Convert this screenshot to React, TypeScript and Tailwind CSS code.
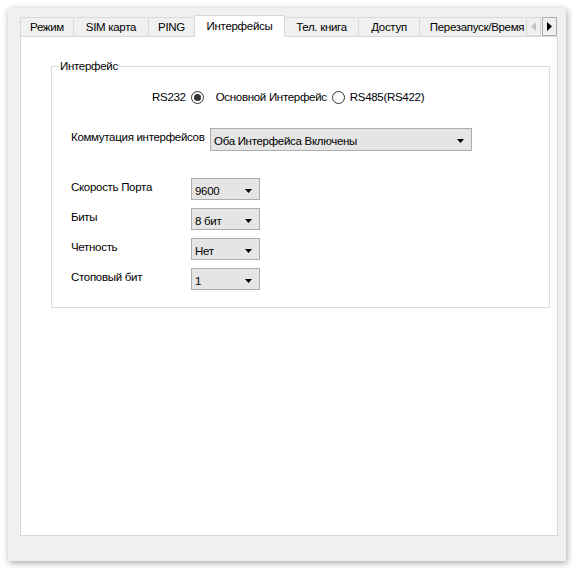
import React from "react";

type Tab = { label: string; width: string; active?: boolean };

const tabs: Tab[] = [
  { label: "Режим", width: "w-[54px]" },
  { label: "SIM карта", width: "w-[76px]" },
  { label: "PING", width: "w-[47px]" },
  { label: "Интерфейсы", width: "w-[91px]", active: true },
  { label: "Тел. книга", width: "w-[75px]" },
  { label: "Доступ", width: "w-[62px]" },
  { label: "Перезапуск/Время", width: "w-[116px]" },
];

const font =
  "font-['Segoe_UI','Liberation_Sans',Arial,sans-serif] text-[11.5px] leading-[16px] tracking-[-0.3px]";

function Radio({ checked }: { checked?: boolean }) {
  return (
    <span className="flex h-[13px] w-[13px] shrink-0 items-center justify-center rounded-full border border-[#333] bg-white">
      {checked && <span className="h-[7px] w-[7px] rounded-full bg-[#333]" />}
    </span>
  );
}

function Arrow() {
  return (
    <svg width="7" height="4" viewBox="0 0 7 4" className="shrink-0">
      <path d="M0 0H7L3.5 4Z" fill="#000" />
    </svg>
  );
}

function Combo({ value, width }: { value: string; width: string }) {
  return (
    <div
      className={`flex h-full ${width} items-center justify-between border border-[#adadad] bg-[#e5e5e5] pl-[3px] pr-[7px] pt-[3px]`}
    >
      <span className="whitespace-nowrap text-black">{value}</span>
      <Arrow />
    </div>
  );
}

function PortRow({ label, value }: { label: string; value: string }) {
  return (
    <div className="flex h-[22px] items-start">
      <span className="mt-[1px] w-[120px] shrink-0 whitespace-nowrap">{label}</span>
      <Combo value={value} width="w-[69px]" />
    </div>
  );
}

export default function App() {
  return (
    <div className={`h-[569px] w-[574px] bg-white p-[8px] text-black ${font}`}>
      <div className="flex h-[553px] w-[558px] flex-col bg-[#f0f0f0] pl-[12px] pr-[9px] pt-[7px] shadow-[1px_2px_7px_rgba(0,0,0,0.35)]">
        {/* tab strip */}
        <div className="relative z-10 flex h-[22px] items-start">
          <div className="flex h-[22px] flex-1 items-start overflow-hidden pl-[1px]">
            {tabs.map((t) =>
              t.active ? (
                <div
                  key={t.label}
                  className={`-ml-px flex h-[22px] ${t.width} shrink-0 items-center justify-center whitespace-nowrap border border-b-0 border-[#d9d9d9] bg-white pb-[1px]`}
                >
                  {t.label}
                </div>
              ) : (
                <div
                  key={t.label}
                  className={`-ml-px mt-[2px] flex h-[19px] ${t.width} shrink-0 items-center justify-center whitespace-nowrap border border-b-0 border-[#d9d9d9] bg-[#f0f0f0]`}
                >
                  {t.label}
                </div>
              )
            )}
          </div>
          <div className="mt-[2px] flex h-[19px] gap-px">
            <div className="flex h-[19px] w-[15px] items-center justify-center border border-[#d9d9d9] bg-[#f0f0f0]">
              <svg width="5" height="9" viewBox="0 0 5 9">
                <path d="M5 0V9L0 4.5Z" fill="#c5c5c5" />
              </svg>
            </div>
            <div className="flex h-[19px] w-[15px] items-center justify-center border border-[#adadad] bg-[#f0f0f0]">
              <svg width="5" height="9" viewBox="0 0 5 9">
                <path d="M0 0V9L5 4.5Z" fill="#000" />
              </svg>
            </div>
          </div>
        </div>

        {/* page */}
        <div className="-mt-px h-[500px] w-[538px] border border-[#d9d9d9] bg-white pl-[30px] pt-[21px]">
          <fieldset className="w-[499px] border border-[#dcdcdc] pb-[17px]">
            <legend className="ml-[7px] px-[1px]">Интерфейс</legend>

            <div className="ml-[100px] mt-[15px] flex h-[16px] items-center whitespace-nowrap">
              <span>RS232</span>
              <span className="ml-[5px]">
                <Radio checked />
              </span>
              <span className="ml-[12px]">Основной Интерфейс</span>
              <span className="ml-[5px]">
                <Radio />
              </span>
              <span className="ml-[5px]">RS485(RS422)</span>
            </div>

            <div className="ml-[19px] mt-[23px] flex h-[23px] items-start">
              <span className="mt-[1px] w-[139px] shrink-0 whitespace-nowrap">
                Коммутация интерфейсов
              </span>
              <Combo value="Оба Интерфейса Включены" width="w-[262px]" />
            </div>

            <div className="ml-[19px] mt-[27px] flex flex-col gap-[8px]">
              <PortRow label="Скорость Порта" value="9600" />
              <PortRow label="Биты" value="8 бит" />
              <PortRow label="Четность" value="Нет" />
              <PortRow label="Стоповый бит" value="1" />
            </div>
          </fieldset>
        </div>
      </div>
    </div>
  );
}
